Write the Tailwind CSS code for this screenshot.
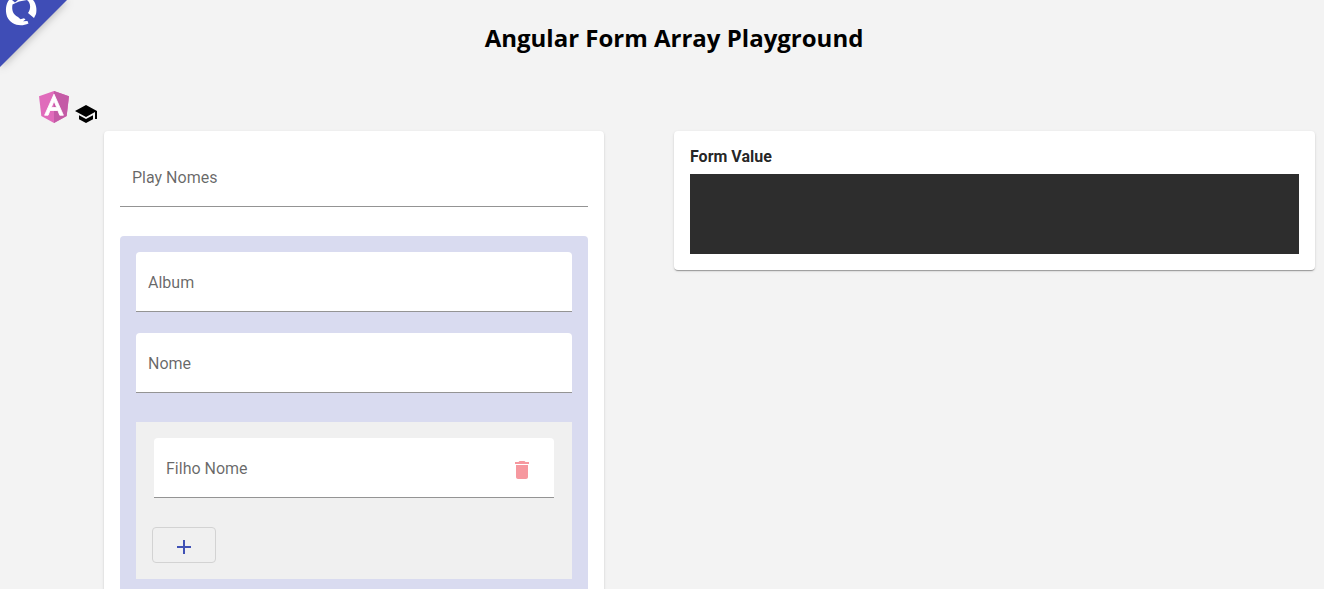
<!DOCTYPE html>
<html lang="pt">
<head>
<meta charset="utf-8">
<meta name="viewport" content="width=device-width, initial-scale=1">
<title>Angular Form Array Playground</title>
<script src="https://cdn.jsdelivr.net/npm/@tailwindcss/browser@4"></script>
</head>
<body class="relative h-screen overflow-hidden bg-[#f3f3f3] font-['Roboto',sans-serif] text-base text-black/87">
<a href="#" aria-label="Repository" class="absolute left-0 top-0 drop-shadow-[0_0_5px_rgba(0,0,0,0.3)]">
  <svg class="block" width="67" height="67" viewBox="0 0 67 67">
    <path fill="#3f4db6" d="M0 0h67L0 67z"/>
    <path fill="#fff" d="M9 0H33C36.500 4 37 10 36 14L34 18 28 13C31 9 31 3 27 0L19 1.500 12.500 4.500C11.500 10 13 14.500 18 17L20.500 19.200 24 18.200 25.500 19.500 23 21.200 27.500 21 28.500 23.500C20 27.500 10.500 24.500 7 16.500 5 10 6 4 9 0z"/>
    <path fill="#3f4db6" d="M12 0h6l-3 2.500z"/>
  </svg>
</a>
<header class="pt-5 pl-6">
  <h1 class="text-center font-['Open_Sans',sans-serif] text-2xl leading-9 font-bold text-black">Angular Form Array Playground</h1>
</header>
<nav class="mt-8 flex h-9 gap-1 pl-9">
  <a href="#" aria-label="Angular">
    <svg class="block" width="36" height="36" viewBox="0 0 250 250">
      <path fill="#e06bbb" d="M125 20 21 57l16 138 88 48 88-48 16-138z"/>
      <path fill="#c45ba6" d="M125 20v223l88-48 16-138z"/>
      <path fill="#fff" stroke="#fff" stroke-width="6" d="M125 43 60 189h24l13-33h55l13 33h25zm19 93h-38l19-46z"/>
    </svg>
  </a>
  <a href="#" aria-label="Tutorial" class="pt-[14px] text-black">
    <svg class="-ml-0.5 block" width="24" height="24" viewBox="0 0 24 24" fill="currentColor"><path d="M5 13.180v4L12 21l7-3.820v-4L12 17l-7-3.820zM12 3 1 9l11 6 9-4.910V17h2V9L12 3z"/></svg>
  </a>
</nav>
<main class="mt-[7px] flex items-start gap-[70px] pr-[9px] pl-[104px]">
  <form class="w-[500px] shrink-0 rounded bg-white p-4 shadow-[0_2px_1px_-1px_rgba(0,0,0,0.2),0_1px_1px_rgba(0,0,0,0.14),0_1px_3px_rgba(0,0,0,0.12)]">
    <input type="text" aria-label="Play Nomes" placeholder="Play Nomes" class="block h-[60px] w-full rounded-t border-b border-[#949494] bg-white px-3 pt-0.5 placeholder:text-black/60">
    <section class="mt-[29px] rounded bg-[#d9dbf0] p-4">
      <input type="text" aria-label="Album" placeholder="Album" class="block h-[60px] w-full rounded-t border-b border-[#949494] bg-white px-3 pt-0.5 placeholder:text-black/60">
      <input type="text" aria-label="Nome" placeholder="Nome" class="mt-[21px] block h-[60px] w-full rounded-t border-b border-[#949494] bg-white px-3 pt-0.5 placeholder:text-black/60">
      <div class="mt-[29px] bg-[#f0f0f0] p-4">
        <div class="mx-0.5 flex h-[60px] items-center rounded-t border-b border-[#949494] bg-white pr-5">
          <input type="text" aria-label="Filho Nome" placeholder="Filho Nome" class="h-full min-w-0 flex-1 px-3 pt-0.5 placeholder:text-black/60">
          <button type="button" aria-label="Delete" class="pt-1 text-[#f6989f]">
            <svg class="block" width="24" height="24" viewBox="0 0 24 24" fill="currentColor"><path d="M6 19c0 1.100.9 2 2 2h8c1.100 0 2-.9 2-2V7H6v12zM19 4h-3.500l-1-1h-5l-1 1H5v2h14V4z"/></svg>
          </button>
        </div>
        <button type="button" aria-label="Add" class="mt-[29px] flex h-9 w-16 items-center justify-center rounded border border-[#d3d3d3] pt-1 text-[#3f51b5]">
          <svg class="block" width="24" height="24" viewBox="0 0 24 24" fill="currentColor"><path d="M19 13h-6v6h-2v-6H5v-2h6V5h2v6h6v2z"/></svg>
        </button>
      </div>
      <div class="h-8"></div>
    </section>
  </form>
  <section class="min-w-0 flex-1 rounded bg-white p-4 shadow-[0_2px_1px_-1px_rgba(0,0,0,0.2),0_1px_1px_rgba(0,0,0,0.14),0_1px_3px_rgba(0,0,0,0.12)]">
    <h2 class="mb-[7px] leading-5 font-bold">Form Value</h2>
    <pre class="h-20 bg-[#2d2d2d]"></pre>
  </section>
</main>
</body>
</html>
